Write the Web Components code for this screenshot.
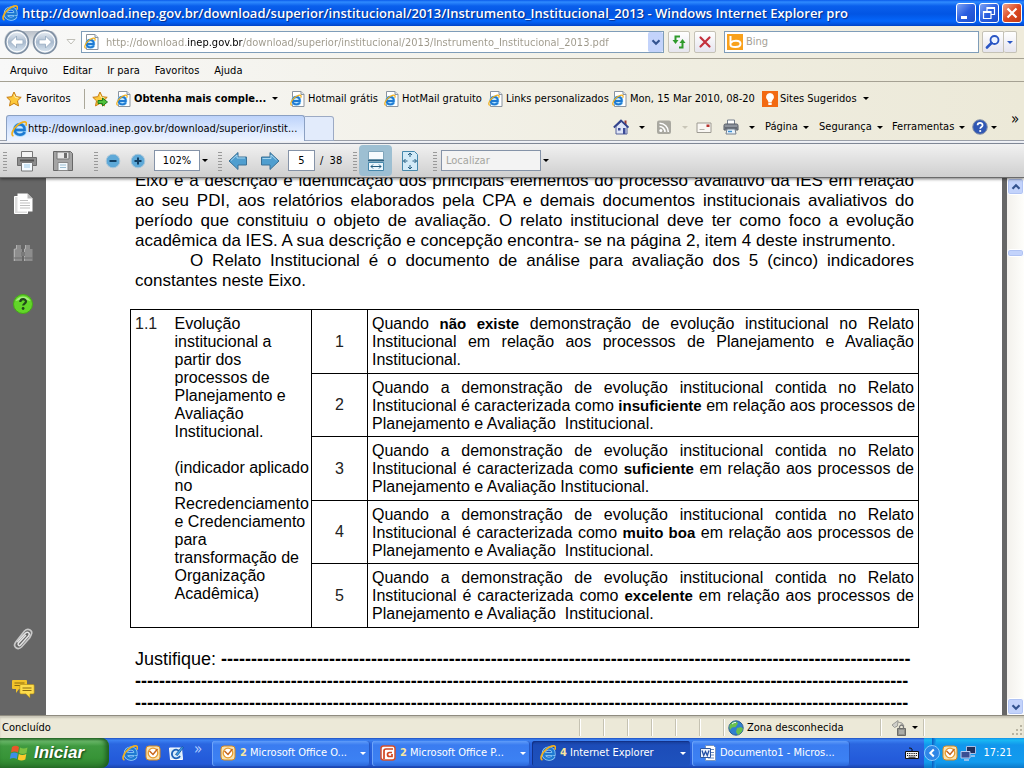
<!DOCTYPE html>
<html lang="pt-BR">
<head>
<meta charset="utf-8">
<title>Instrumento_Institucional_2013 - Windows Internet Explorer pro</title>
<style>
html, body { margin: 0; height: 100%; }
body { font: 11px/16px "DejaVu Sans Condensed", "Noto Sans", sans-serif; color: #000; overflow: hidden; }
</style>
</head>
<body>
<browser-window></browser-window>
<script>
const IE = '<path d="M3.800 9H13.600C13.900 5.400 11.600 3.400 8.900 3.400 5.800 3.400 3.700 5.700 3.700 8.700s2.100 5 5.300 5c2.300 0 4-1.100 4.700-2.700" fill="none" stroke="#9bd6fb" stroke-width="4"/><path d="M3.800 9H13.600C13.900 5.400 11.600 3.400 8.900 3.400 5.800 3.400 3.700 5.700 3.700 8.700s2.100 5 5.300 5c2.300 0 4-1.100 4.700-2.700" fill="none" stroke="#1f7ad2" stroke-width="2.600"/><path d="M2.500 15C-.8 13.800 2 8 6.500 4.200 10 1.200 14.200 0 15.200 1.600c.5.900.2 2-.4 3" fill="none" stroke="#f2b01e" stroke-width="1.700"/>';
const PAGE = '<path d="M2.500.5H11l3 3v12H2.500z" fill="#fff" stroke="#8a94a0"/><path d="M11 .5v3h3" fill="#dfe6ee" stroke="#8a94a0"/>';
const STAR = '<path d="M8 1l2.200 4.700 5 .6-3.700 3.500 1 5.100L8 12.400 3.500 14.900l1-5.100L.8 6.300l5-.6z" fill="#fdc93b" stroke="#c77c12"/><path d="M8 3.500l1.300 3 3 .5" fill="none" stroke="#fff2b0"/>';
const MAIL = '<rect x="1" y="1" width="14" height="14" rx="3" fill="#f8e3b0" stroke="#d98a1c"/><circle cx="8" cy="8" r="4.800" fill="#fff" stroke="#e79a2d" stroke-width="1.300"/><path d="M4.500 6l3.500 3.500L12.500 4" fill="none" stroke="#c8651b" stroke-width="1.500"/>';
const ICONS = {
  ie: [16, IE],
  page: [16, PAGE + '<g transform="translate(0 3.500) scale(.72)">' + IE + '</g>'],
  star: [16, STAR],
  staradd: [16, STAR + '<path d="M6 9.500h4.500V7l5 4-5 4v-2.500H6z" fill="#4fc23c" stroke="#1f7c1d"/>'],
  back: [26, '<circle cx="13" cy="13" r="11.500" fill="url(#n)" stroke="#7d8da0" stroke-width="1.500"/><circle cx="13" cy="13" r="9.800" fill="none" stroke="#fff"/><path d="M6.500 13l6-6v3.800H19v4.400h-6.500V19z" fill="#fff" stroke="#9fb2c6"/><defs><linearGradient id="n" x2="0" y2="1"><stop stop-color="#f0f4f8"/><stop offset=".5" stop-color="#a9bace"/><stop offset="1" stop-color="#dfebf5"/></linearGradient></defs>'],
  down: [16, '<path d="M4 6l4 4 4-4" fill="none" stroke="#33538f" stroke-width="2.500"/>'],
  up: [16, '<path d="M4 10l4-4 4 4" fill="none" stroke="#33538f" stroke-width="2.500"/>'],
  refresh: [16, '<path d="M9 2.500H4.500V7" fill="none" stroke="#2f9a2c" stroke-width="2"/><path d="M1.500 6h6l-3 4zM8.500 9h6l-3-4z" fill="#2f9a2c"/><path d="M11.500 8v5.500H8" fill="none" stroke="#2f9a2c" stroke-width="2"/>'],
  stop: [16, '<path d="M3.500 3.500l9 9M12.500 3.500l-9 9" stroke="#c3303c" stroke-width="2.200" stroke-linecap="round"/>'],
  bing: [16, '<path d="M0 0h16v16H0z" fill="#f9a11b"/><path d="M3.500 2v9C3.500 12.800 6 13 8.500 13c3.200 0 5-1.300 5-3.200S12 6.800 9 6.800c-2.500 0-4 .6-5 1.700" fill="none" stroke="#fff" stroke-width="2"/>'],
  search: [16, '<circle cx="9.500" cy="6" r="4" fill="#eef4ff" stroke="#2a56c4" stroke-width="1.800"/><path d="M6.500 9L2 13.500" stroke="#2a56c4" stroke-width="2.600" stroke-linecap="round"/>'],
  bulb: [16, '<path d="M0 0h16v16H0z" fill="#f26a13"/><path d="M8 2a4 4 0 0 1 2.400 7.200c-.6.600-.7 1.400-.7 2.200H6.300c0-.8-.1-1.600-.7-2.200A4 4 0 0 1 8 2zM6.300 12h3.400v2H6.300z" fill="#fff"/>'],
  home: [16, '<path d="M11.500 1.500h2V6h-2z" fill="#9b3a34"/><path d="M3 7.500V15h11V7.500L8.500 2.500z" fill="#dfe5f6" stroke="#56639b"/><path d="M.8 8.500L8 1.500l7.500 7" fill="none" stroke="#33438c" stroke-width="1.800"/><path d="M5 9h2.500v2.500H5zM10 9h2.500v6H10z" fill="#3c4b96"/>'],
  rss: [16, '<rect x="1" y="1.500" width="14" height="13.500" rx="2" fill="#a9a8a0"/><circle cx="4.800" cy="11.500" r="1.500" fill="#fff"/><path d="M3.500 7.500a5.500 5.500 0 0 1 5.500 5.500M3.500 4.200A8.800 8.800 0 0 1 12.300 13" fill="none" stroke="#fff" stroke-width="1.600"/>'],
  mail: [16, '<path d="M1 4h14v9.500H1z" fill="#f9f7f3" stroke="#9d9a92"/><path d="M10.500 5.500h3v2.500h-3z" fill="#b8342f"/><path d="M3.500 10.500h5" stroke="#b7b3aa"/>'],
  printer: [16, '<path d="M4.500 1h7v5h-7z" fill="#fff" stroke="#77818e"/><path d="M1 6.500Q1 5 2.500 5h11Q15 5 15 6.500V11H1z" fill="#8d939c" stroke="#555b65"/><path d="M2 9h12" stroke="#3d434d"/><path d="M4 10h8l1 5H3z" fill="#e9f3fb" stroke="#77818e"/><path d="M5 12.500h4" stroke="#3c8fd0" stroke-width="1.500"/>'],
  help: [16, '<circle cx="8" cy="8" r="7.300" fill="#3057b4" stroke="#8a94a8"/><path d="M5.600 6.200c0-3.200 5-3.200 5 0 0 1.800-2.400 1.800-2.400 3.600" fill="none" stroke="#fff" stroke-width="1.700"/><circle cx="8.200" cy="12" r="1.100" fill="#fff"/>'],
  pprint: [24, '<path d="M6.500 2.500h11v7h-11z" fill="#f4f4f4" stroke="#777"/><path d="M2.500 8.500h19v8h-19z" fill="#8d8d8d" stroke="#6c6c6c"/><path d="M5 11.500h14" stroke="#555" stroke-width="2"/><path d="M6.500 13.500h11v8.500h-11z" fill="#f5fbff" stroke="#777"/><path d="M9 16h6M9 18h6" stroke="#9ecae8"/>'],
  psave: [24, '<path d="M2.500 2.500h17l2 2v17h-19z" fill="#a4a4a4" stroke="#676767"/><path d="M6 3h12v7H6z" fill="#e9e9e9" stroke="#777"/><path d="M13 4h3v5h-3z" fill="#6c6c6c"/><path d="M7 13.500h10v8H7z" fill="#f3f9fd" stroke="#888"/><path d="M9 16h6M9 18.500h6" stroke="#9bbdd1"/>'],
  minus: [16, '<circle cx="8" cy="8" r="6.800" fill="#5ea9d8" stroke="#a9c6d9"/><path d="M4.500 8h7" stroke="#123f63" stroke-width="2"/>'],
  plus: [16, '<circle cx="8" cy="8" r="6.800" fill="#5ea9d8" stroke="#a9c6d9"/><path d="M4.500 8h7M8 4.500v7" stroke="#123f63" stroke-width="2"/>'],
  left: [20, '<path d="M1 10l9-8.500V6h8.500v8H10v4.500z" fill="#4f9ecf" stroke="#3b7196"/><path d="M3 9.500l6-5.500v3h8" fill="none" stroke="#a8d6f0"/>'],
  right: [20, '<path d="M19 10l-9-8.500V6H1.500v8H10v4.500z" fill="#4f9ecf" stroke="#3b7196"/><path d="M2.500 7.500H11V4l5.500 5" fill="none" stroke="#a8d6f0"/>'],
  fitw: [22, '<path d="M3.500 1.500h15v8h-15z" fill="#f6fbfe" stroke="#7fa5bb"/><path d="M3.500 12.500h15v8h-15z" fill="#eaf6fd" stroke="#4688ac"/><path d="M3 10.500h16" stroke="#2d607f" stroke-width="1.500"/><path d="M6 16.500h10M8 14.500l-2 2 2 2M14 14.500l2 2-2 2" fill="none" stroke="#245d80"/>'],
  fitp: [22, '<path d="M3.500 1.500h12l3 3v16h-15z" fill="#d3ebf8" stroke="#4688ac"/><path d="M11 3v4M11 15v4M4.500 11h4M13.500 11h4M9 5l2-2 2 2M9 17l2 2 2-2M6.500 9l-2 2 2 2M15.500 9l2 2-2 2" fill="none" stroke="#245d80"/>'],
  pages: [24, '<path d="M3.500 4.500h13v17h-13z" fill="#dedede" stroke="#fff"/><path d="M6.500 1.500h10l5 5v13h-15z" fill="#fff"/><path d="M16.500 1.500v5h5z" fill="#bbb"/><path d="M9 8.500h8M9 11h10M9 13.500h10M9 16h10" stroke="#bfbfbf"/>'],
  binoc: [24, '<path d="M5 3h5v4h1v12H2.500V7H5zM14 3h5v4h2.500v12H13V7h1z" fill="#8d8d8d"/><path d="M5.500 3v4h-2v12M14.500 3v4h-1v12" fill="none" stroke="#b0b0b0"/><path d="M10 10h4v4h-4z" fill="#7a7a7a"/><path d="M2.500 16H11M13 16h8.500" stroke="#6c6c6c"/>'],
  ghelp: [24, '<circle cx="12" cy="12" r="9.500" fill="#62d628" stroke="#45aa17"/><path d="M4.500 9a8.500 8.500 0 0 1 15 0q-7-3-15 0z" fill="#a4ef7c"/><path d="M9.300 10c0-3.800 5.700-3.600 5.700-.4 0 2-2.800 2-2.800 4" fill="none" stroke="#20471a" stroke-width="2.200"/><circle cx="12.100" cy="16.500" r="1.400" fill="#20471a"/>'],
  clip: [24, '<path d="M6 15l8.500-9c2.500-2 5 .4 3 3L9.500 18c-1.400 1.400-3.300-.2-2-2L15 8" fill="none" stroke="#e4e4e4" stroke-width="1.500"/><path d="M18.500 11l-8 9c-3.500 3.500-9 0-6-4.500L13.500 4C17 .5 22.500 3.500 20 8l-1.500 3" fill="none" stroke="#c8c8c8" stroke-width="1.700"/>'],
  notes: [24, '<path d="M2 3h13q1 0 1 1v7q0 1-1 1H8l-3 4v-4H2q-1 0-1-1V4q0-1 1-1z" fill="#f2c32a"/><path d="M3.500 6h10M3.500 8.500h6" stroke="#8a6a10"/><path d="M10 7.500h12q1.200 0 1.200 1.200v7q0 1.200-1.200 1.200h-3v4l-4-4h-5q-1.200 0-1.200-1.200v-7q0-1.200 1.200-1.200z" fill="#fddc4b" stroke="#a98512" stroke-width=".6"/><path d="M11.500 11h9M11.500 13.500h9" stroke="#8a6a10"/>'],
  globe: [16, '<circle cx="8" cy="8" r="7.200" fill="#2f7fd0" stroke="#2a5c91"/><path d="M4 2.500Q9 0 10 3.500L7.500 7 4 7.500 2 10Q0 5 4 2.500zM9 8l4-1 2 1.500Q14 13 10 15L8 12z" fill="#69c04c"/><path d="M4 4q2-2 4-1.500" stroke="#e1f5ff" fill="none"/>'],
  lock: [18, '<path d="M2 6l6-4.500L7.500 7l-3 1.500zM8 3q5 0 6 4" fill="#cfcfca" stroke="#9b9b95"/><path d="M7.500 9.500h8v7h-8z" fill="#8f8f8a" stroke="#6b6b68"/><path d="M9.500 9.500V7.500q2-3 4 0v2" fill="none" stroke="#777" stroke-width="1.300"/><path d="M9 12h5M9 14h5" stroke="#c8c8c4"/>'],
  flag: [20, '<path d="M3 4q3.500-2.500 7 0L9 9.500q-3.500-2.200-7 0z" fill="#e8572a"/><path d="M11 4.500q3.500 2.200 7.500 0L17.500 10q-4 2-7.500 0z" fill="#7cc142"/><path d="M1.800 10.500q3.500-2.200 7 0L7.800 16q-3.500-2.200-7 0z" fill="#3b8ee8"/><path d="M9.800 11q3.500 2.200 7.500 0l-1 5.500q-4 2-7.500 0z" fill="#fbc92c"/>'],
  outlook: [16, MAIL],
  desk: [16, '<path d="M1.500 3h12l1 11.500H2.500z" fill="#d6ecfb" stroke="#fff"/><path d="M12 7A4.300 4.300 0 1 0 12 11" fill="none" stroke="#1c62b8" stroke-width="1.800"/><path d="M7.500 9.500l6.500-8 1.500 1-6 8z" fill="#3aa0e8" stroke="#174a90" stroke-width=".7"/>'],
  ppt: [16, '<rect x="1" y="1" width="14" height="14" rx="2.500" fill="#fff" stroke="#d5502b" stroke-width="1.500"/><path d="M4 14V6Q4 4 6 4h7M12 7.500H9.500q-2 0-2 2t2 2H12V9" fill="none" stroke="#d2451e" stroke-width="1.700"/>'],
  word: [16, '<path d="M5.500.5h8l2 2v13h-10z" fill="#fff" stroke="#7994bd"/><path d="M8 4.500h6M11 7.500h3M11 10h3M8 13h6" stroke="#6888bb"/><path d="M.5 3.500h10v9H.5z" fill="#eaf1fd" stroke="#2d57a0"/><path d="M2 5.500l1.700 5L5.500 6.500l1.800 4L9 5.500" fill="none" stroke="#2450a4" stroke-width="1.300"/>'],
  keyb: [16, '<path d="M1.500 6.500h13v7h-13z" fill="#f4f4f4" stroke="#111"/><path d="M3 8.500h10M3 10.500h10" stroke="#111" stroke-dasharray="1.200 1"/><path d="M4.500 12.200h7M8 6V4Q8 3 5 3" fill="none" stroke="#111"/>'],
  chev: [16, '<circle cx="8" cy="8" r="7.500" fill="#2e86e6" stroke="#8cc8fb"/><path d="M9.800 4.500L6.300 8l3.500 3.500" fill="none" stroke="#fff" stroke-width="2"/>'],
  net: [16, '<path d="M6.500 1.500h9v7h-9z" fill="#20305c" stroke="#a9bfe6"/><path d="M1 6.500h9v6.500H1z" fill="#3a4f93" stroke="#b8cbee"/><path d="M4 15h5M11 11h4" stroke="#b8cbee" stroke-width="1.500"/>']
};

function define(tag, css, html) {
  const tpl = document.createElement('template');
  tpl.innerHTML = '<style>*{box-sizing:border-box}button,input{font:inherit;color:inherit;margin:0;padding:0;border:0;background:none;outline:0;min-width:0}button{display:flex;align-items:center;white-space:nowrap;text-align:left}a{color:inherit;text-decoration:none}' + css + '</style>' + html;
  customElements.define(tag, class extends HTMLElement {
    constructor() {
      super();
      this.attachShadow({ mode: 'open' }).append(tpl.content.cloneNode(true));
    }
  });
}

/* <ui-icon name size>: one glyph of the icon set */
customElements.define('ui-icon', class extends HTMLElement {
  connectedCallback() {
    if (this.shadowRoot) return;
    const [box, body] = ICONS[this.getAttribute('name')];
    const size = this.getAttribute('size') || box;
    this.attachShadow({ mode: 'open' }).innerHTML =
      `<style>:host{display:inline-flex;flex:none}svg{display:block}</style><svg width="${size}" height="${size}" viewBox="0 0 ${box} ${box}" aria-hidden="true">${body}</svg>`;
  }
});

define('ui-caret', ':host{display:block;flex:none;width:0;height:0;border:3px solid transparent;border-top-color:currentColor;border-bottom:0}', '');

define('title-bar', `
:host{display:flex;align-items:center;height:26px;padding:0 2px;gap:3px;background:linear-gradient(#0a5bea,#2f8bff 2px,#0a5fec 6px,#0255e4 14px,#0466fb 21px,#0354e0 24px,#0143c4);color:#fff;font:600 13px/24px "Open Sans",sans-serif;text-shadow:1px 1px 1px #0a2a80}
h1{flex:1;margin:0;font:inherit;white-space:nowrap;overflow:hidden}
button{width:20px;height:20px;border:1px solid #fff;border-radius:3px;background:linear-gradient(135deg,#7fa4f5,#2a5ee0 50%,#1c4ecb);justify-content:center}
.close{background:linear-gradient(135deg,#f0a48c,#dd4a22 50%,#c23a14)}
ui-icon{margin-right:1px}`,
`<ui-icon name="ie"></ui-icon><h1>http://download.inep.gov.br/download/superior/institucional/2013/Instrumento_Institucional_2013 - Windows Internet Explorer pro</h1>
<button aria-label="Minimizar"><svg width="16" height="16"><path d="M3 11h6v3H3z" fill="#fff"/></svg></button>
<button aria-label="Restaurar"><svg width="16" height="16"><path d="M6 6V2.500h7.500v7H10M6 3.500h7.500M2.500 6.500H10v7H2.500zM2.500 7.500H10" fill="none" stroke="#fff" stroke-width="1.200"/></svg></button>
<button class="close" aria-label="Fechar"><svg width="16" height="16"><path d="M3.500 3.500l9 9M12.500 3.500l-9 9" stroke="#fff" stroke-width="2.200"/></svg></button>`);

define('address-bar', `
:host{display:flex;align-items:center;height:32px;padding:0 7px 0 4px;background:linear-gradient(90deg,#f8f8f8,#f3f1e7 60%,#efebdb)}
.nav{display:flex;gap:2px;margin-right:3px;border-radius:13px;background:linear-gradient(transparent 2px,#b9c0c9 2px,#e4e7ea 14px,transparent 18px)}.nav button+button ui-icon{transform:scaleX(-1)}
.hist{width:20px;height:20px;justify-content:center}
.field{display:flex;align-items:center;height:22px;border:1px solid #7f9db9;background:#fff}
.url{flex:1;padding-left:2px;gap:6px}.url input,.find input{flex:1}
.url input{height:18px;-webkit-text-fill-color:transparent;background:linear-gradient(90deg,#9c9789 82px,#000 82px,#000 137px,#9c9789 137px);-webkit-background-clip:text;background-clip:text}
.drop{width:15px;height:20px;justify-content:center;background:#c3d3fb;border-radius:2px}
.sq{width:22px;height:22px;margin-left:4px;justify-content:center;border:1px solid #c5c2b6;border-radius:2px;background:linear-gradient(#fff,#e6e5ee)}
.find{width:255px;margin-left:8px;padding-left:2px;gap:3px}.find input::placeholder{color:#a5a196;opacity:1}
.split{flex:none;margin-left:3px;border-radius:2px 0 0 2px}.split+.sq{width:13px;margin:0;border-left:0;color:#2a56c4}`,
`<div class="nav"><button aria-label="Voltar"><ui-icon name="back"></ui-icon></button><button aria-label="Avançar"><ui-icon name="back"></ui-icon></button></div>
<button class="hist" aria-label="Páginas recentes"><svg width="10" height="8"><path d="M1 1.500h8L5 6z" fill="#fff" stroke="#c0bfb8"/></svg></button>
<div class="field url"><ui-icon name="page"></ui-icon><input aria-label="Endereço" value="http://download.inep.gov.br/download/superior/institucional/2013/Instrumento_Institucional_2013.pdf"><button class="drop" aria-label="Mostrar endereços"><ui-icon name="down" size="14"></ui-icon></button></div>
<button class="sq" aria-label="Atualizar"><ui-icon name="refresh"></ui-icon></button><button class="sq" aria-label="Parar"><ui-icon name="stop"></ui-icon></button>
<div class="field find"><ui-icon name="bing"></ui-icon><input aria-label="Pesquisar" placeholder="Bing"></div>
<button class="sq split" aria-label="Pesquisar"><ui-icon name="search"></ui-icon></button><button class="sq" aria-label="Opções de pesquisa"><ui-caret></ui-caret></button>`);

define('menu-bar', `
:host{display:flex;align-items:center;gap:15px;height:24px;padding:2px 10px 0;border-top:1px solid #a5a193;border-bottom:1px solid #a5a193;background:linear-gradient(90deg,#f8f8f8,#f0eee2 60%,#ece9d8)}`,
`<button>Arquivo</button><button>Editar</button><button>Ir para</button><button>Favoritos</button><button>Ajuda</button>`);

define('favorites-bar', `
:host{display:flex;align-items:center;height:33px;padding-left:6px;background:linear-gradient(90deg,#f8f8f8,#f0eee2 60%,#ece9d8)}
button{height:20px;gap:4px}
a{display:flex;align-items:center;gap:2px;white-space:nowrap;flex:none;width:var(--w)}
hr{width:1px;height:20px;margin:0 7px 0 0;border:0;background:#aaa799}.fav{width:78px}.add{width:24px}
ui-caret{margin-left:4px}`,
`<button class="fav"><ui-icon name="star"></ui-icon>Favoritos</button><hr><button class="add" aria-label="Adicionar a favoritos"><ui-icon name="staradd"></ui-icon></button>
<a href="#" style="--w:174px"><ui-icon name="page"></ui-icon><b>Obtenha mais comple...</b><ui-caret></ui-caret></a>
<a href="#" style="--w:94px"><ui-icon name="page"></ui-icon>Hotmail grátis</a>
<a href="#" style="--w:104px"><ui-icon name="page"></ui-icon>HotMail gratuito</a>
<a href="#" style="--w:124px"><ui-icon name="page"></ui-icon>Links personalizados</a>
<a href="#" style="--w:150px"><ui-icon name="page"></ui-icon>Mon, 15 Mar 2010, 08-20</a>
<a href="#" style="--w:110px"><ui-icon name="bulb"></ui-icon>Sites Sugeridos<ui-caret></ui-caret></a>`);

define('tab-bar', `
:host{display:flex;height:29px;padding-left:6px;background:linear-gradient(90deg,#f8f8f8,#f0eee2 60%,#ece9d8);border-bottom:1px solid #8c95a5;box-shadow:inset 0 -2px #f1f3f8,inset 0 -3px #9a9fa9}
.tab{width:299px;height:26px;padding:0 4px;gap:1px;border:1px solid #8ba0c2;border-bottom:0;border-radius:3px 3px 0 0;background:linear-gradient(#bdd3fa,#dce9ff 60%,#eef4ff)}
.new{width:29px;height:25px;margin-top:1px;border:1px solid #9caac4;border-left:0;border-radius:0 3px 0 0;background:#e2ebfb}
nav{display:flex;flex:1;justify-content:flex-end;height:24px}
nav button{flex:none;width:var(--w);gap:5px}.i{gap:10px}nav button:last-child{font-size:15px;line-height:8px;align-items:flex-start;padding-left:1px}
.off{color:#c9c6b8}`,
`<button class="tab"><ui-icon name="ie"></ui-icon>http://download.inep.gov.br/download/superior/instit...</button><button class="new" aria-label="Nova guia"></button>
<nav><button class="i" style="--w:43px" aria-label="Página inicial"><ui-icon name="home"></ui-icon><ui-caret></ui-caret></button>
<button class="i" style="--w:40px" aria-label="Feeds"><ui-icon name="rss"></ui-icon><ui-caret class="off"></ui-caret></button>
<button style="--w:27px" aria-label="Ler email"><ui-icon name="mail"></ui-icon></button>
<button class="i" style="--w:42px" aria-label="Imprimir"><ui-icon name="printer"></ui-icon><ui-caret></ui-caret></button>
<button style="--w:54px">Página<ui-caret></ui-caret></button><button style="--w:73px">Segurança<ui-caret></ui-caret></button><button style="--w:80px">Ferramentas<ui-caret></ui-caret></button>
<button style="--w:38px;gap:3px" aria-label="Ajuda"><ui-icon name="help"></ui-icon><ui-caret></ui-caret></button><button style="--w:14px" aria-label="Mais">»</button></nav>`);

define('tool-grip', ':host{display:block;flex:none;width:4px;height:20px;background:radial-gradient(circle,#999 40%,transparent 50%) 0 0/2px 3px}', '');

define('pdf-toolbar', `
:host{display:flex;align-items:center;height:34px;padding:0 3px;background:linear-gradient(#f1f1f1,#cfcfcf);border-bottom:1px solid #6b6b6b;position:relative;z-index:1;box-shadow:0 1px 3px #0008}
button{flex:none;justify-content:center}
.b{width:36px}.s{width:25px}
input{height:21px;border:1px solid #8593a8;background:#fff;text-align:center}
.zoom{width:46px;margin-left:4px}.num{width:27px;margin-left:2px}.of{width:32px;padding-left:5px;white-space:nowrap}
.c{width:10px;height:20px}.a{width:32px}.on{width:33px;height:31px;border-radius:4px;background:#9dbfd2;margin-left:2px}
.find{width:100px;text-align:left;padding-left:4px;background:#f3f3f3}.find::placeholder{color:#a5a5a0;opacity:1}`,
`<tool-grip></tool-grip><button class="b" style="margin-left:2px" aria-label="Imprimir"><ui-icon name="pprint"></ui-icon></button><button class="b" aria-label="Salvar"><ui-icon name="psave"></ui-icon></button>
<tool-grip style="margin:0 2px 0 13px"></tool-grip><button class="s" aria-label="Reduzir"><ui-icon name="minus"></ui-icon></button><button class="s" aria-label="Ampliar"><ui-icon name="plus"></ui-icon></button>
<input class="zoom" aria-label="Zoom" value="102%"><button class="c" aria-label="Níveis de zoom"><ui-caret></ui-caret></button>
<tool-grip style="margin:0 0 0 8px"></tool-grip><button class="a" aria-label="Página anterior"><ui-icon name="left"></ui-icon></button><button class="a" aria-label="Próxima página"><ui-icon name="right"></ui-icon></button>
<input class="num" aria-label="Número da página" value="5"><span class="of">/&nbsp; 38</span>
<tool-grip style="margin-left:6px"></tool-grip><button class="on" aria-label="Ajustar largura"><ui-icon name="fitw"></ui-icon></button><button class="b" aria-label="Página inteira"><ui-icon name="fitp"></ui-icon></button>
<tool-grip style="margin:0 4px 0 5px"></tool-grip><input class="find" aria-label="Localizar" placeholder="Localizar"><button class="c" aria-label="Opções de localização"><ui-caret></ui-caret></button>`);

define('pdf-sidebar', `
:host{display:flex;flex-direction:column;flex:none;width:46px;padding:14px 0;background:#666;gap:26px;align-items:center}
.gap{margin-top:auto}`,
`<button aria-label="Páginas"><ui-icon name="pages"></ui-icon></button><button aria-label="Localizar"><ui-icon name="binoc"></ui-icon></button><button aria-label="Ajuda"><ui-icon name="ghelp"></ui-icon></button>
<button class="gap" aria-label="Anexos"><ui-icon name="clip"></ui-icon></button><button aria-label="Comentários"><ui-icon name="notes"></ui-icon></button>`);

define('just-lines', `:host{display:block}::slotted(span){display:block;white-space:nowrap;text-align:justify;text-align-last:justify}::slotted(.end){text-align-last:left}::slotted(.ind){padding-left:55px}`, '<slot></slot>');

const rows = [
  ['Quando <b>não existe</b> demonstração de evolução institucional no Relato', 'Institucional em relação aos processos de Planejamento e Avaliação', 'Institucional.'],
  ...['insuficiente', 'suficiente', 'muito boa', 'excelente'].map(w => ['Quando a demonstração de evolução institucional contida no Relato', `Institucional é caracterizada como <b>${w}</b> em relação aos processos de`, 'Planejamento e Avaliação' + (w === 'suficiente' ? ' ' : '&nbsp; ') + 'Institucional.'])
];
const tableRows = rows.map((r, i) => '<tr>' + (i ? '' : '<td class="n" rowspan="5">1.1</td><td class="t" rowspan="5">Evolução<br>institucional a<br>partir dos<br>processos de<br>Planejamento e<br>Avaliação<br>Institucional.<br><br>(indicador aplicado<br>no<br>Recredenciamento<br>e Credenciamento<br>para<br>transformação de<br>Organização<br>Acadêmica)</td>') +
  `<td class="k">${i + 1}</td><td class="d"><just-lines><span>${r[0]}</span><span>${r[1]}</span><span class="end">${r[2]}</span></just-lines></td></tr>`).join('');

define('document-page', `
:host{display:block;flex:1;min-width:0;overflow:hidden;padding:0 88px 0 89px;background:#fff;border-right:5px solid #666;font-family:"Liberation Sans",Arial,sans-serif}
.intro{margin-top:-7px;font-size:17px;line-height:20px}
table{width:calc(100% + 10px);margin:18px -5px 0;border-collapse:collapse;table-layout:fixed;font-size:16px;line-height:18px;border:1px solid #000}
tr{height:64px}tr:nth-child(even){height:63px}
td{padding:5px 4px 0;vertical-align:top}
td b{font-size:15px}
.n,.k{color:#222}
.t{border-right:1px solid #000;padding-right:0;white-space:nowrap}.k{text-align:center;vertical-align:middle;padding-top:0}.k,.d{border:1px solid #000}
.just{margin:20px 0 0;font-size:18px;line-height:22px;white-space:nowrap}.just b{display:block}.just b:first-of-type{display:inline}`,
`<just-lines class="intro"><span>Eixo é a descrição e identificação dos principais elementos do processo avaliativo da IES em relação</span><span>ao seu PDI, aos relatórios elaborados pela CPA e demais documentos institucionais avaliativos do</span><span>período que constituiu o objeto de avaliação. O relato institucional deve ter como foco a evolução</span><span class="end">acadêmica da IES. A sua descrição e concepção encontra- se na página 2, item 4 deste instrumento.</span><span class="ind">O Relato Institucional é o documento de análise para avaliação dos 5 (cinco) indicadores</span><span class="end">constantes neste Eixo.</span></just-lines>
<table><colgroup><col style="width:40px"><col style="width:141px"><col style="width:56px"><col></colgroup><tbody>${tableRows}</tbody></table>
<p class="just">Justifique: <b>${'-'.repeat(115)}</b><b>${'-'.repeat(129)}</b><b>${'-'.repeat(129)}</b></p>`);

define('scroll-bar', `
:host{display:flex;flex-direction:column;flex:none;width:17px;background:linear-gradient(90deg,#f3f1ec,#fefefb)}
button{width:17px;height:17px;justify-content:center;border:1px solid #fff;border-radius:3px;background:#c3d3fb;box-shadow:inset 0 0 0 1px #b0c3f3}
.thumb{height:8px;margin:54px 0 auto}`,
`<button aria-label="Rolar para cima"><ui-icon name="up" size="14"></ui-icon></button><button class="thumb" aria-label="Posição"></button><button aria-label="Rolar para baixo"><ui-icon name="down" size="14"></ui-icon></button>`);

define('status-bar', `
:host{display:flex;align-items:center;height:23px;padding-top:1px;box-sizing:border-box;background:#ece9d8;border-top:1px solid #8f8c80;box-shadow:inset 0 2px 2px #c9c6b8}
span{display:flex;align-items:center;height:17px;gap:4px;padding-left:5px;border-left:1px solid #c5c2b2;box-shadow:inset 1px 0 #fff;width:24px;flex:none;white-space:nowrap}
.msg{flex:1;border:0;box-shadow:none;padding-left:2px}.zone{width:157px;padding-left:4px;gap:3px}.lk{width:43px;padding-left:9px;gap:4px}.grip{width:101px;justify-content:flex-end;align-items:flex-end}`,
`<span class="msg">Concluído</span><span></span><span></span><span></span><span></span><span></span><span></span><span class="zone"><ui-icon name="globe"></ui-icon>Zona desconhecida</span><span class="lk"><ui-icon name="lock"></ui-icon><ui-caret></ui-caret></span><span class="grip"><svg width="13" height="13"><path d="M9 2h2v2H9zM9 6h2v2H9zM5 6h2v2H5zM9 10h2v2H9zM5 10h2v2H5zM1 10h2v2H1z" fill="#b8b4a2"/></svg></span>`);

define('task-button', `
:host{display:block;flex:none;width:158px;color:#fff}
button{width:100%;height:25px;padding:0 4px 0 8px;gap:4px;border-radius:3px;background:linear-gradient(#5f9cf9,#3a7cf0 4px,#3c81f3 80%,#2a66d8);box-shadow:inset 1px 0 #6fa5fa,inset -1px 0 #2558c4}
:host([active]) button{background:linear-gradient(#153b96,#1c4cb8 4px,#1e52bd);box-shadow:inset 1px 1px #12328a}
.cap{flex:1;overflow:hidden;white-space:nowrap}::slotted(b){color:#f7e6a0}`,
`<button><slot name="icon"></slot><span class="cap"><slot></slot></span><slot name="caret"></slot></button>`);

define('task-bar', `
:host{display:flex;align-items:center;height:30px;background:linear-gradient(#1f4fc0,#3d83f3 2px,#2a66e0 6px,#245cdb 20px,#2459d6 26px,#1a43ab);color:#fff}
.start{width:109px;height:30px;padding-left:9px;gap:5px;border-radius:0 8px 8px 0;background:linear-gradient(#2d6f2d,#6cba6b 3px,#3f9a40 8px,#379437 20px,#2c7a2c);box-shadow:inset -3px 0 5px #1c5a1f;font:italic bold 17px/26px "Liberation Sans",Arial,sans-serif;text-shadow:1px 1px 2px #123f12}
.quick{display:flex;align-items:center;gap:7px;width:103px;padding-left:13px}.quick span{font-size:15px;line-height:12px;padding-bottom:8px;color:#b7d0ff;margin-left:3px}
.list{display:flex;gap:2px;flex:1;min-width:0}
.lang{margin-right:4px}
.tray{display:flex;align-items:center;width:100px;height:30px;gap:2px;padding-right:12px;background:linear-gradient(90deg,transparent 8px,#0d5bbf 8px,#189ff0 12px,transparent 12px),linear-gradient(#1290e8,#19b9f3 2px,#1196ec 7px,#129bee 24px,#0c78c8);background-color:#1290e8}
time{margin-left:auto}`,
`<button class="start"><ui-icon name="flag"></ui-icon>Iniciar</button>
<div class="quick"><ui-icon name="ie"></ui-icon><ui-icon name="outlook"></ui-icon><ui-icon name="desk"></ui-icon><span>»</span></div>
<div class="list"><task-button><ui-icon slot="icon" name="outlook"></ui-icon><b>2</b> Microsoft Office O...<ui-caret slot="caret"></ui-caret></task-button>
<task-button><ui-icon slot="icon" name="ppt"></ui-icon><b>2</b> Microsoft Office P...<ui-caret slot="caret"></ui-caret></task-button>
<task-button active><ui-icon slot="icon" name="ie"></ui-icon><b>4</b> Internet Explorer<ui-caret slot="caret"></ui-caret></task-button>
<task-button><ui-icon slot="icon" name="word"></ui-icon>Documento1 - Micros...</task-button></div>
<ui-icon class="lang" name="keyb"></ui-icon><div class="tray"><ui-icon name="chev"></ui-icon><ui-icon name="outlook"></ui-icon><ui-icon name="net"></ui-icon><time>17:21</time></div>`);

define('browser-window', `:host{display:flex;flex-direction:column;height:100vh}main{display:flex;flex:1;min-height:0}`,
`<title-bar></title-bar><address-bar></address-bar><menu-bar></menu-bar><favorites-bar></favorites-bar><tab-bar></tab-bar><pdf-toolbar></pdf-toolbar>
<main><pdf-sidebar></pdf-sidebar><document-page></document-page><scroll-bar></scroll-bar></main><status-bar></status-bar><task-bar></task-bar>`);
</script>
</body>
</html>
